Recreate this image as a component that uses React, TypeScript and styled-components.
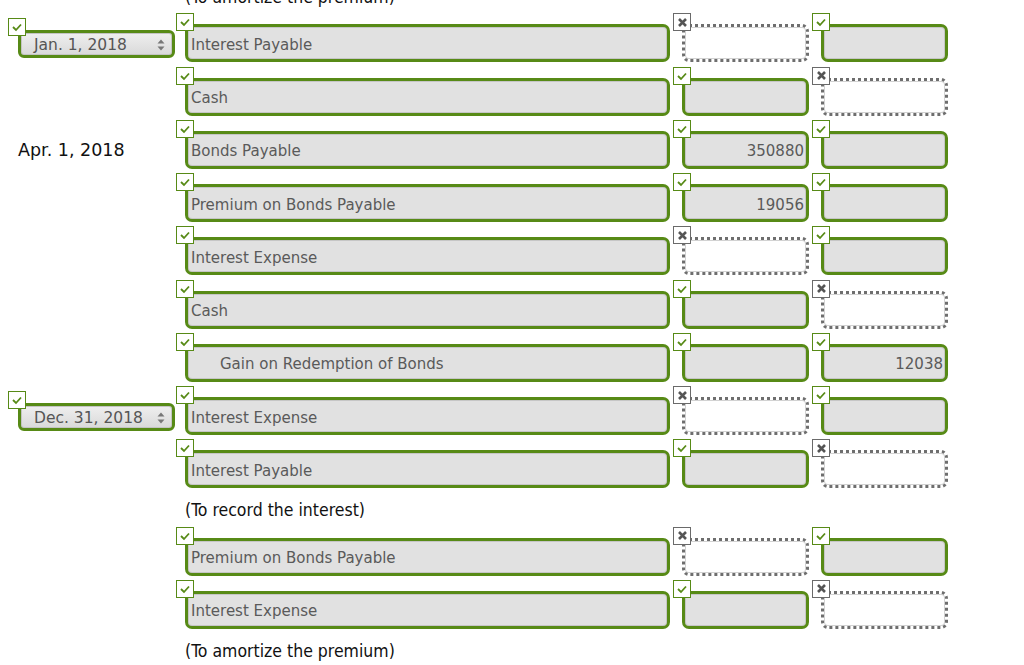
import React from 'react';
import styled, { createGlobalStyle } from 'styled-components';

const GREEN = '#578a16';

const GlobalStyle = createGlobalStyle`
    html, body {
        margin: 0;
        padding: 0;
        background: #fff;
        overflow: hidden;
    }
    body {
        font-family: "DejaVu Sans", Verdana, sans-serif;
    }
`;

const Page = styled.div`
    width: 1024px;
    height: 665px;
    overflow: hidden;
`;

const Sheet = styled.div`
    margin-top: -25px;
`;

const Row = styled.div`
    display: grid;
    grid-template-columns: 173px 485px 127px 127px;
    column-gap: 12px;
    align-items: end;
    padding-top: 15.25px;
`;

const Note = styled.div`
    padding: 13px 0 3px 185px;
    height: 18px;
    line-height: 18px;
    font-family: "DejaVu Sans Condensed", "DejaVu Sans", sans-serif;
    font-size: 17.5px;
    color: #111;
`;

const DateCell = styled.div`
    position: relative;
    padding-left: 18px;
    align-self: stretch;
    display: flex;
    align-items: flex-end;
`;

const DateText = styled.div`
    font-size: 17.5px;
    color: #111;
    line-height: 20px;
    margin-bottom: 9px;
    white-space: nowrap;
`;

const DateSelect = styled.div`
    position: relative;
    flex: none;
    box-sizing: border-box;
    width: 157px;
    height: 28px;
    margin-bottom: 4px;
    border: 3px solid ${GREEN};
    border-radius: 6px;
    background: linear-gradient(#efefef, #d9d9d9);
    box-shadow: inset 0 0 0 1px #c4c4c4;
    display: flex;
    align-items: center;
    justify-content: space-between;
    padding: 1px 7px 0 13px;
    font-size: 15.5px;
    color: #555;
    white-space: nowrap;
`;

const Arrows = styled.svg`
    width: 8px;
    height: 12px;
`;

const Field = styled.div<{ $empty?: boolean; $align?: 'left' | 'right'; $indent?: boolean }>`
    position: relative;
    box-sizing: border-box;
    height: 38px;
    border: 3px ${(p) => (p.$empty ? 'dotted #6e6e6e' : `solid ${GREEN}`)};
    border-radius: 7px;
    background: ${(p) => (p.$empty ? '#fff' : '#e1e1e1')};
    box-shadow: inset 0 0 0 1px ${(p) => (p.$empty ? '#d2d2d2' : '#c6c6c6')};
    display: flex;
    align-items: center;
    justify-content: ${(p) => (p.$align === 'right' ? 'flex-end' : 'flex-start')};
    padding: ${(p) => (p.$align === 'right' ? '3px 2px 0 0' : p.$indent ? '3px 0 0 32px' : '3px 0 0 3px')};
    font-size: 15px;
    color: #5a5a5a;
    white-space: nowrap;
`;

const Badge = styled.span<{ $ok: boolean; $left?: number; $top?: number }>`
    position: absolute;
    left: ${(p) => p.$left ?? -12}px;
    top: ${(p) => p.$top ?? -14}px;
    box-sizing: border-box;
    width: 18px;
    height: 18px;
    background: #fff;
    border: 1px solid ${(p) => (p.$ok ? GREEN : '#6a6a6a')};
    display: flex;
    align-items: center;
    justify-content: center;
    z-index: 2;
`;

const Mark = ({ ok }: { ok: boolean }) =>
    ok ? (
        <svg width="12" height="10" viewBox="0 0 12 10">
            <polyline points="2,5 5,8 10,2.5" fill="none" stroke={GREEN} strokeWidth="1.8" />
        </svg>
    ) : (
        <svg width="11" height="11" viewBox="0 0 11 11">
            <path d="M2 2 L9 9 M9 2 L2 9" stroke="#555" strokeWidth="2.6" />
        </svg>
    );

type Cell = { text?: string; ok: boolean };

type Entry = {
    date?: { kind: 'select' | 'text'; label: string };
    account: string;
    indent?: boolean;
    debit: Cell;
    credit: Cell;
};

type Block = { entries: Entry[]; note: string };

const ok = (text?: string): Cell => ({ ok: true, text });
const bad: Cell = { ok: false };

const blocks: Block[] = [
    {
        entries: [
            { date: { kind: 'select', label: 'Jan. 1, 2018' }, account: 'Interest Payable', debit: bad, credit: ok() },
            { account: 'Cash', debit: ok(), credit: bad },
            { date: { kind: 'text', label: 'Apr. 1, 2018' }, account: 'Bonds Payable', debit: ok('350880'), credit: ok() },
            { account: 'Premium on Bonds Payable', debit: ok('19056'), credit: ok() },
            { account: 'Interest Expense', debit: bad, credit: ok() },
            { account: 'Cash', debit: ok(), credit: bad },
            { account: 'Gain on Redemption of Bonds', indent: true, debit: ok(), credit: ok('12038') },
            { date: { kind: 'select', label: 'Dec. 31, 2018' }, account: 'Interest Expense', debit: bad, credit: ok() },
            { account: 'Interest Payable', debit: ok(), credit: bad },
        ],
        note: '(To record the interest)',
    },
    {
        entries: [
            { account: 'Premium on Bonds Payable', debit: bad, credit: ok() },
            { account: 'Interest Expense', debit: ok(), credit: bad },
        ],
        note: '(To amortize the premium)',
    },
];

const AmountField = ({ cell }: { cell: Cell }) => (
    <Field $empty={!cell.ok} $align="right">
        <Badge $ok={cell.ok}>
            <Mark ok={cell.ok} />
        </Badge>
        {cell.text}
    </Field>
);

const EntryRow = ({ entry }: { entry: Entry }) => (
    <Row>
        <DateCell>
            {entry.date?.kind === 'select' && (
                <DateSelect>
                    <Badge $ok $left={-13} $top={-15}>
                        <Mark ok />
                    </Badge>
                    {entry.date.label}
                    <Arrows viewBox="0 0 8 12">
                        <path d="M4 0.5 L7.5 4.5 H0.5 Z M4 11.5 L7.5 7.5 H0.5 Z" fill="#777" />
                    </Arrows>
                </DateSelect>
            )}
            {entry.date?.kind === 'text' && <DateText>{entry.date.label}</DateText>}
        </DateCell>
        <Field $indent={entry.indent}>
            <Badge $ok>
                <Mark ok />
            </Badge>
            {entry.account}
        </Field>
        <AmountField cell={entry.debit} />
        <AmountField cell={entry.credit} />
    </Row>
);

const App: React.FC = () => (
    <Page>
        <GlobalStyle />
        <Sheet>
            <Note>(To amortize the premium)</Note>
            {blocks.map((block, i) => (
                <React.Fragment key={i}>
                    {block.entries.map((entry, j) => (
                        <EntryRow key={j} entry={entry} />
                    ))}
                    <Note>{block.note}</Note>
                </React.Fragment>
            ))}
        </Sheet>
    </Page>
);

export default App;
